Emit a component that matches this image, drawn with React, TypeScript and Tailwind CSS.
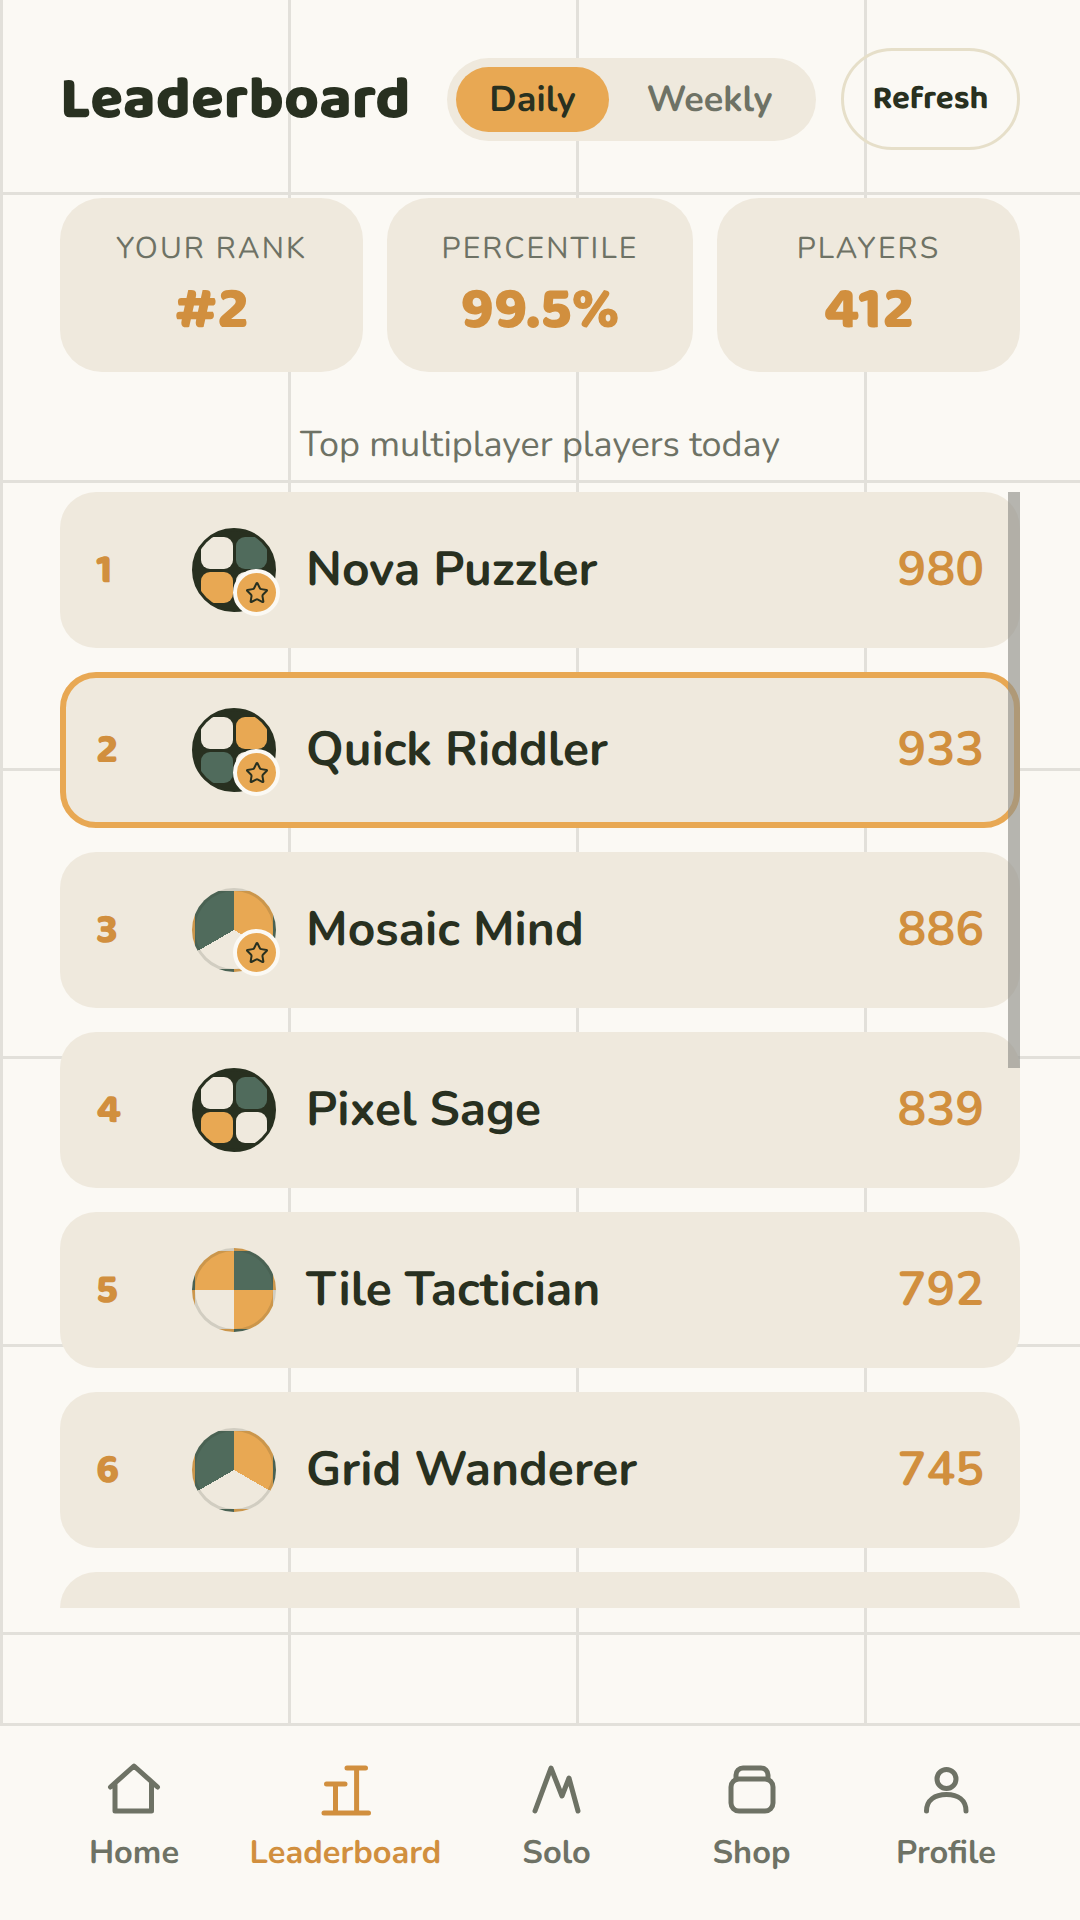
import { Star } from "lucide-react";

const body = "font-['Nunito','Noto_Sans',sans-serif]";
const head = "font-['Baloo_2','Nunito',sans-serif]";

const players = [
  { rank: 1, name: "Nova Puzzler", score: 980, av: "t1", star: true },
  { rank: 2, name: "Quick Riddler", score: 933, av: "t2", star: true, me: true },
  { rank: 3, name: "Mosaic Mind", score: 886, av: "c3", star: true },
  { rank: 4, name: "Pixel Sage", score: 839, av: "t4", star: false },
  { rank: 5, name: "Tile Tactician", score: 792, av: "c4", star: false },
  { rank: 6, name: "Grid Wanderer", score: 745, av: "c3", star: false },
];

function Tile({ c }: { c: string }) {
  return <div className={`rounded-[9px] ${c}`} />;
}

function Avatar({ kind, star }: { kind: string; star: boolean }) {
  const W = "bg-[#efe9dd]";
  const G = "bg-[#506b5c]";
  const O = "bg-[#e8a853]";
  const tiles = kind === "t1" ? [W, G, O, W] : kind === "t2" ? [W, O, G, W] : [W, G, O, W];
  return (
    <div className="relative w-[84px] h-[84px] shrink-0">
      {kind[0] === "t" ? (
        <div className="w-full h-full rounded-full border-[3px] border-[#283020] bg-[#283020] overflow-hidden p-[6px] grid grid-cols-2 grid-rows-2 gap-[3px]">
          {tiles.map((c, i) => (
            <Tile key={i} c={c} />
          ))}
        </div>
      ) : kind === "c3" ? (
        <div className="w-full h-full rounded-full border-[3px] border-[#28302026] bg-[conic-gradient(#e8a853_0deg_120deg,#efe9dd_120deg_240deg,#506b5c_240deg_360deg)]" />
      ) : (
        <div className="w-full h-full rounded-full border-[3px] border-[#28302026] bg-[conic-gradient(#506b5c_0deg_90deg,#e8a853_90deg_180deg,#efe9dd_180deg_270deg,#e8a853_270deg_360deg)]" />
      )}
      {star && (
        <div className="absolute right-[-4px] bottom-[-4px] w-[47px] h-[47px] rounded-full bg-[#e8a853] border-[4px] border-[#fbf9f4] flex items-center justify-center">
          <Star size={24} strokeWidth={2} color="#283020" />
        </div>
      )}
    </div>
  );
}

function Row({ p }: { p: (typeof players)[number] }) {
  return (
    <div
      className={`h-[156px] shrink-0 rounded-[36px] bg-[#efe9dd] flex items-center ${
        p.me ? "border-[6px] border-[#e8a853] px-[30px]" : "px-[36px]"
      }`}
    >
      <div className={`${head} w-[96px] shrink-0 pt-[4px] text-[42px] leading-[42px] font-extrabold text-[#d18f3e]`}>{p.rank}</div>
      <Avatar kind={p.av} star={p.star} />
      <div className="ml-[30px] flex-1 pb-[2px] text-[48px] font-bold text-[#283020]">{p.name}</div>
      <div className="pb-[2px] text-[48px] font-bold text-[#d18f3e]">{p.score}</div>
    </div>
  );
}

function Stat({ label, value }: { label: string; value: string }) {
  return (
    <div className="h-[174px] rounded-[42px] bg-[#efe9dd] flex flex-col items-center justify-center">
      <div className="text-[30px] leading-[40px] tracking-[2.1px] text-[#6e7265]">{label}</div>
      <div className={`${head} mt-[12px] text-[60px] leading-[60px] font-extrabold text-[#d18f3e]`}>{value}</div>
    </div>
  );
}

const stroke = { fill: "none", strokeWidth: 5, strokeLinecap: "round", strokeLinejoin: "round", stroke: "currentColor" } as const;

const nav = [
  { label: "Home", d: <path d="M12.5 35 L36 14 L59.5 35 M17 31 V59 H53.5 V31" {...stroke} /> },
  {
    label: "Leaderboard",
    d: <path d="M37 16 H55.5 M46.6 16 V61 M16.5 32 H35 M25.5 32 V61 M14 61 H58.5" {...stroke} />,
    active: true,
  },
  { label: "Solo", d: <path d="M14 59 L30 16 L41 44 L48 26 L57 59" {...stroke} /> },
  {
    label: "Shop",
    d: (
      <>
        <rect x="15" y="27" width="42" height="32" rx="8" {...stroke} />
        <path d="M20 27 V23 a7 7 0 0 1 7 -7 H45 a7 7 0 0 1 7 7 V27" {...stroke} />
      </>
    ),
  },
  {
    label: "Profile",
    d: (
      <>
        <circle cx="36.5" cy="27" r="9.5" {...stroke} />
        <path d="M16.5 59 C16.5 48 25 42.5 36.5 42.5 S56 48 56 59" {...stroke} />
      </>
    ),
  },
];

export default function App() {
  return (
    <div
      className={`${body} [text-rendering:geometricPrecision] relative w-[1080px] h-[1920px] overflow-hidden flex flex-col bg-[#fbf9f4] bg-[linear-gradient(to_right,#e2e0da_3px,transparent_3px),linear-gradient(to_bottom,#e2e0da_3px,transparent_3px)] bg-[size:288px_288px] bg-[position:0_192px]`}
    >
      <header className="h-[198px] shrink-0 px-[60px] flex items-center">
        <h1 className={`${head} pt-[4px] text-[60px] font-extrabold text-[#283020]`}>Leaderboard</h1>
        <div className="ml-auto mr-[25px] flex items-center w-[369px] h-[83px] rounded-full bg-[#efe9dd] px-[9px]">
          <div className="w-[153px] h-[65px] pt-[1px] rounded-full bg-[#e8a853] flex items-center justify-center text-[36px] font-bold text-[#283020]">
            Daily
          </div>
          <div className="flex-1 pt-[1px] pl-[3px] flex items-center justify-center text-[36px] font-bold text-[#6e7265]">Weekly</div>
        </div>
        <div className={`${head} w-[179px] h-[102px] pt-[2px] rounded-full border-[3px] border-[#e6dfc9] flex items-center justify-center text-[33px] font-bold text-[#283020]`}>
          Refresh
        </div>
      </header>

      <section className="px-[60px] grid grid-cols-[303px_306px_303px] gap-[24px] shrink-0">
        <Stat label="YOUR RANK" value="#2" />
        <Stat label="PERCENTILE" value="99.5%" />
        <Stat label="PLAYERS" value="412" />
      </section>

      <div className="h-[120px] shrink-0 pt-[26px] flex items-center justify-center text-[36px] text-[#6e7265]">
        Top multiplayer players today
      </div>

      <main className="relative mx-[60px] h-[1116px] shrink-0 overflow-hidden flex flex-col gap-[24px]">
        {players.map((p) => (
          <Row key={p.rank} p={p} />
        ))}
        <div className="h-[156px] shrink-0 rounded-[36px] bg-[#efe9dd]" />
        <div className="absolute top-0 right-0 w-[12px] h-[576px] bg-[#90908a]/65" />
      </main>

      <div className="flex-1" />

      <nav className="h-[197px] shrink-0 border-t-[3px] border-[#e2e0da] bg-[#fbf9f4] px-[24px] grid grid-cols-[220px_203px_219px_171px_218px]">
        {nav.map((n) => (
          <div key={n.label} className={`flex flex-col items-center pt-[26px] ${n.active ? "text-[#d18f3e]" : "text-[#6e7265]"}`}>
            <svg width="72" height="72" viewBox="0 0 72 72">
              {n.d}
            </svg>
            <div className="mt-[8px] text-[32.6px] leading-[42px] font-bold">{n.label}</div>
          </div>
        ))}
      </nav>
    </div>
  );
}
